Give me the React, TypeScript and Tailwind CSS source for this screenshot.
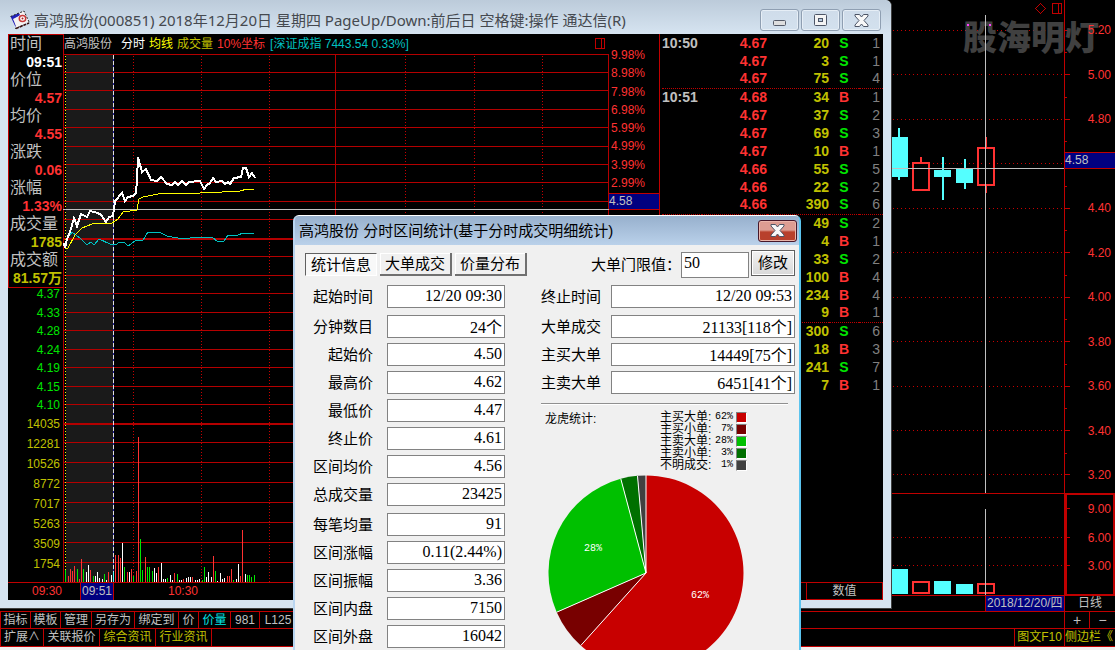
import React from "react";

type Colour = "r" | "g" | "w" | "c";

const barFill: Record<Colour, string> = { r: "#ff3232", g: "#00e600", w: "#ffffff", c: "#54ffff" };

const gridRows = [72, 90, 109, 127, 146, 164, 182, 201, 219, 256, 275, 293, 312, 330, 349, 367, 386, 404, 442, 462, 482, 502, 522, 542, 562];

const volumes: [number, number, Colour][] = [
  [65, 12, "g"], [68, 6, "r"], [70, 13, "r"], [72, 11, "r"], [74, 16, "r"], [77, 13, "g"], [79, 3, "r"], [81, 23, "r"],
  [83, 13, "g"], [86, 10, "w"], [88, 17, "w"], [90, 12, "r"], [93, 6, "g"], [95, 6, "w"], [97, 10, "w"], [99, 4, "w"],
  [102, 3, "w"], [104, 8, "g"], [106, 2, "w"], [108, 10, "r"], [111, 7, "w"], [113, 10, "c"], [115, 27, "r"], [118, 27, "r"],
  [120, 24, "r"], [122, 39, "w"], [124, 15, "g"], [127, 10, "r"], [129, 10, "w"], [131, 13, "r"], [133, 6, "g"], [136, 11, "r"],
  [138, 145, "r"], [140, 43, "g"], [142, 12, "g"], [145, 25, "r"], [147, 15, "g"], [149, 15, "g"], [152, 11, "g"], [154, 14, "w"],
  [156, 9, "w"], [158, 15, "r"], [161, 19, "w"], [163, 3, "w"], [165, 3, "w"], [167, 4, "g"], [170, 7, "w"], [172, 2, "w"],
  [174, 9, "r"], [177, 8, "g"], [179, 2, "w"], [181, 2, "w"], [183, 3, "r"], [186, 4, "w"], [188, 5, "w"], [190, 5, "w"],
  [192, 5, "r"], [195, 2, "w"], [197, 2, "w"], [199, 3, "w"], [202, 2, "g"], [204, 15, "g"], [206, 5, "w"], [208, 10, "w"],
  [211, 5, "w"], [213, 26, "r"], [215, 11, "g"], [217, 1, "w"], [220, 9, "w"], [222, 3, "w"], [224, 4, "w"], [227, 6, "r"],
  [229, 6, "r"], [231, 13, "r"], [233, 2, "g"], [236, 3, "w"], [238, 18, "w"], [240, 6, "r"], [242, 52, "r"], [245, 8, "w"],
  [247, 7, "g"], [249, 7, "g"], [251, 5, "g"], [254, 7, "g"],
];

const priceLine =
  "64,243 65,248 67,239 70,232 74,218 77,226 81,214 87,217 90,211 98,213 101,215 106,222 109,217 113,216 115,201 122,193 125,201 128,197 133,196 136,193 137,180 138,157 142,172 146,169 151,180 157,181 161,177 167,184 172,185 175,182 178,185 182,181 186,185 189,182 200,181 204,189 207,185 210,183 213,178 216,182 222,181 225,184 228,182 230,184 234,178 241,177 243,168 246,168 249,177 252,173 255,178";
const averageLine =
  "65,249 68,248 75,235 82,228 92,224 112,223 118,219 123,212 137,210 139,199 143,197 163,193 200,193 222,192 240,191 247,189 254,189";
const indexLine =
  "67,239 72,232 80,238 87,245 91,242 94,245 99,239 110,244 117,244 119,242 124,242 128,246 135,241 143,240 148,232 159,232 167,236 183,239 197,237 213,238 217,241 224,241 228,235 238,235 243,233 254,233";

const quoteRows = [
  ["时间", "09:51", "text-white"],
  ["价位", "4.57", "text-[#ff3232]"],
  ["均价", "4.55", "text-[#ff3232]"],
  ["涨跌", "0.06", "text-[#ff3232]"],
  ["涨幅", "1.33%", "text-[#ff3232]"],
  ["成交量", "1785", "text-[#c0c000]"],
  ["成交额", "81.57万", "text-[#c0c000]"],
];

const ticks: [string, string, string, string, string][] = [
  ["10:50", "4.67", "20", "S", "1"],
  ["", "4.67", "3", "S", "1"],
  ["", "4.67", "75", "S", "4"],
  ["10:51", "4.68", "34", "B", "1"],
  ["", "4.67", "37", "S", "2"],
  ["", "4.67", "69", "S", "3"],
  ["", "4.67", "10", "B", "1"],
  ["", "4.66", "55", "S", "5"],
  ["", "4.66", "22", "S", "2"],
  ["", "4.66", "390", "S", "6"],
  ["", "", "49", "S", "2"],
  ["", "", "4", "B", "1"],
  ["", "", "33", "S", "2"],
  ["", "", "100", "B", "4"],
  ["", "", "234", "B", "4"],
  ["", "", "9", "B", "1"],
  ["", "", "300", "S", "6"],
  ["", "", "18", "B", "3"],
  ["", "", "241", "S", "7"],
  ["", "", "7", "B", "1"],
];
const minuteStarts = [3, 10, 16];

const leftFields: [string, string][][] = [
  [["起始时间", "12/20 09:30"]],
  [["分钟数目", "24个"], ["起始价", "4.50"], ["最高价", "4.62"], ["最低价", "4.47"], ["终止价", "4.61"], ["区间均价", "4.56"], ["总成交量", "23425"]],
  [["每笔均量", "91"], ["区间涨幅", "0.11(2.44%)"], ["区间振幅", "3.36"], ["区间内盘", "7150"], ["区间外盘", "16042"]],
];
const rightFields: [string, string][][] = [
  [["终止时间", "12/20 09:53"]],
  [["大单成交", "21133[118个]"], ["主买大单", "14449[75个]"], ["主卖大单", "6451[41个]"]],
];

const slices = [
  { name: "主买大单", pct: "62%", fill: "#c80000", swatch: "bg-[#c80000]", from: 0, to: 222 },
  { name: "主买小单", pct: "7%", fill: "#780000", swatch: "bg-[#780000]", from: 222, to: 246.3 },
  { name: "主卖大单", pct: "28%", fill: "#00c000", swatch: "bg-[#00c000]", from: 246.3, to: 345 },
  { name: "主卖小单", pct: "3%", fill: "#007000", swatch: "bg-[#007000]", from: 345, to: 355 },
  { name: "不明成交", pct: "1%", fill: "#404040", swatch: "bg-[#404040]", from: 355, to: 360 },
];

function slicePath(from: number, to: number) {
  const at = (deg: number) => {
    const a = (deg * Math.PI) / 180;
    return `${(98 + 97.5 * Math.sin(a)).toFixed(2)} ${(98 - 97.5 * Math.cos(a)).toFixed(2)}`;
  };
  return `M98 98 L${at(from)} A97.5 97.5 0 ${to - from > 180 ? 1 : 0} 1 ${at(to)} Z`;
}

function Candle({ x, top, bottom, high, low, up }: { x: number; top: number; bottom: number; high: number; low: number; up?: boolean }) {
  return up ? (
    <g fill="none" stroke="#ff3232" strokeWidth="2">
      <rect x={x + 1} y={top + 1} width="16" height={bottom - top - 2} />
      <path d={`M${x + 9} ${high}V${top}M${x + 9} ${bottom}V${low}`} />
    </g>
  ) : (
    <g fill="#54ffff">
      <rect x={x} y={top} width="17" height={bottom - top} />
      <rect x={x + 8} y={high} width="2" height={low - high} />
    </g>
  );
}

function DailyChart() {
  return (
    <svg width="172" height="596" viewBox="892 0 172 596" shapeRendering="crispEdges" className="block shrink-0 overflow-visible">
      <g stroke="#c80000" strokeDasharray="1 3">
        {[30, 74, 119, 163, 208, 252, 297, 341, 386, 430, 474, 537, 565].map((y) => (
          <path key={y} d={`M893 ${y}.5H1064`} />
        ))}
      </g>
      <g stroke="#c00000">
        {[30, 74, 119, 163, 208, 252, 297, 341, 386, 430, 474, 508, 537, 565].map((y) => (
          <path key={y} d={`M1064 ${y}.5h6`} />
        ))}
        {[52, 97, 141, 186, 230, 275, 319, 364, 408, 453, 523, 551].map((y) => (
          <path key={y} d={`M1064 ${y}.5h3`} />
        ))}
        <path d="M892 493.5H1064M892 595.5H1064" />
      </g>
      <text x="963" y="50" fontSize="34" fontWeight="900" fill="#404040" fontFamily="Noto Sans CJK SC, sans-serif">
        股海明灯
      </text>
      <path d="M1040.500 3.500l5 5-5 5-5-5zM1052.500 3.500h9v10h-9zM1058.500 3.500v10" fill="none" stroke="#c00000" />
      <rect x="967" y="24" width="2" height="2" fill="#ff40ff" />
      <rect x="989" y="24" width="2" height="2" fill="#ff40ff" />
      <rect x="892" y="137" width="16" height="40" fill="#54ffff" />
      <rect x="898" y="128" width="2" height="52" fill="#54ffff" />
      <Candle x={912} top={162} bottom={191} high={157} low={191} up />
      <Candle x={934} top={170} bottom={177} high={157} low={200} />
      <Candle x={956} top={169} bottom={183} high={159} low={189} />
      <Candle x={977} top={147} bottom={186} high={137} low={193} up />
      <rect x="892" y="569" width="16" height="25" fill="#54ffff" />
      <rect x="934" y="581" width="17" height="13" fill="#54ffff" />
      <rect x="956" y="584" width="17" height="10" fill="#54ffff" />
      <path d="M913 582h16v11h-16zM978 584h16v9h-16z" fill="none" stroke="#ff3232" strokeWidth="2" />
      <path d="M985.500 15V493M985.500 509V595M892 168.500H1064" stroke="#c0c0c0" />
    </svg>
  );
}

function MinuteChart() {
  return (
    <svg width="546" height="529" viewBox="63 54 546 529" shapeRendering="crispEdges" className="block">
      <rect x="66" y="55" width="47" height="527" fill="#1a1a1a" />
      <g stroke="#b40000">
        <path d="M63 54.500H609M63 582.500H609" />
        {gridRows.map((y) => (
          <path key={y} d={`M63 ${y}.5H609`} />
        ))}
        <path d="M63 239H609M63 424H609" strokeWidth="2" />
        <path d="M63.500 54V583M335.500 54V583M608.500 54V583" />
        <path d="M133.500 56V582M201.500 56V582M269.500 56V582M405.500 56V582M474.500 56V582M542.500 56V582" strokeDasharray="1 2" stroke="#c80000" />
      </g>
      <path d="M65.500 56V582" stroke="#ffff00" strokeDasharray="1 2" />
      <path d="M113.500 55V582" stroke="#2020a0" />
      <path d="M113.500 55V582" stroke="#e0e0e0" strokeDasharray="4 2" />
      <path d="M63 209.500H609" stroke="#c0c0c0" />
      {volumes.map(([x, h, c]) => (
        <rect key={x} x={x} y={582 - h} width="1" height={h} fill={barFill[c]} />
      ))}
      <g fill="none">
        <polyline points={indexLine} stroke="#00c0c0" />
        <polyline points={averageLine} stroke="#ffff00" />
        <polyline points={priceLine} stroke="#ffffff" strokeWidth="2" />
      </g>
    </svg>
  );
}

function CaptionButton({ label, children }: { label: string; children: React.ReactNode }) {
  return (
    <button aria-label={label} className="flex h-[22px] w-[39px] items-center justify-center rounded-[3px] border border-[#8f9fb2] bg-linear-to-b from-[#cfdcea] to-[#d3e1ee] shadow-[inset_0_0_0_1px_#e6eef6]">
      {children}
    </button>
  );
}

function CrossIcon() {
  return (
    <svg width="15" height="13" viewBox="0 0 15 13">
      <path d="M1 .5h4.500l2 2.500 2-2.500H14v1.500L10 6.500l4 4.500v1.500H9.500l-2-2.500-2 2.500H1V11l4-4.500L1 2z" fill="#f8f8f8" stroke="#4d5566" strokeLinejoin="round" />
    </svg>
  );
}

function ChartWindow() {
  return (
    <section className="absolute top-0 left-0 flex h-[609px] w-[892px] flex-col rounded-tr-md border-r border-b border-[#404040] bg-[#d6e4f1] px-2 pb-2">
      <header className="-mx-2 flex h-[34px] shrink-0 items-center rounded-tr-md bg-linear-to-b from-[#bccbda] to-[#d6e4f1] pt-[6px] pr-[10px] pl-[9px]">
        <svg width="22" height="20" viewBox="0 0 22 20" className="shrink-0">
          <path d="M1.500 6.500L15 1l5 10.500L6.500 18z" fill="#f6f2f2" />
          <path d="M1.500 6.500L10 3l1 2-5 4 1 8-1-1z" fill="#2222b8" />
          <path d="M4 9l6-3 3 7-6 3z" fill="#f6f2f2" />
          <path d="M1.500 6.500L15 1l5.500 12L6 18.500" fill="none" stroke="#222" strokeDasharray="2 1.500" />
          <path d="M7 18.500l13-5.500" stroke="#3c1010" strokeWidth="1.500" strokeDasharray="3 1" />
          <ellipse cx="13.500" cy="8.500" rx="3.200" ry="3" fill="#fff" stroke="#c83838" strokeWidth="1.500" />
          <circle cx="13.500" cy="8.500" r="1" fill="#a02020" />
        </svg>
        <h1 className="ml-[3px] grow font-['Noto_Sans','Noto_Sans_CJK_SC',sans-serif] text-[15px] leading-5 whitespace-nowrap text-[#45494f]">
          高鸿股份(000851) 2018年12月20日 星期四 PageUp/Down:前后日 空格键:操作 通达信(R)
        </h1>
        <div className="flex gap-[2px]">
          <CaptionButton label="最小化">
            <svg width="13" height="6" viewBox="0 0 13 6" className="mt-[5px]">
              <rect x=".5" y=".5" width="12" height="5" rx="1" fill="#dedede" stroke="#555b68" />
            </svg>
          </CaptionButton>
          <CaptionButton label="还原">
            <svg width="13" height="12" viewBox="0 0 13 12">
              <rect x=".5" y=".5" width="12" height="11" rx="1" fill="#f4f4f4" stroke="#4d5566" />
              <rect x="4.500" y="4.500" width="4" height="3" fill="#b8cce0" stroke="#4d5566" />
            </svg>
          </CaptionButton>
          <CaptionButton label="关闭">
            <CrossIcon />
          </CaptionButton>
        </div>
      </header>

      <div className="flex min-h-0 grow flex-col bg-black">
        <div className="flex h-[549px]">
          <aside className="flex w-[55px] shrink-0 flex-col">
            <dl className="-mr-px border border-[#c00000] bg-black">
              {quoteRows.map(([name, value, tone]) => (
                <div key={name} className="h-9">
                  <dt className="h-[18px] pl-px text-base leading-[18px] whitespace-nowrap text-[#c0c0c0]">{name}</dt>
                  <dd className={`h-[18px] pr-px text-right text-sm leading-[18px] font-bold whitespace-nowrap ${tone}`}>{value}</dd>
                </div>
              ))}
            </dl>
            <ul className="flex h-[123px] flex-col justify-between pr-[3px] text-right text-xs leading-3 text-[#00e600]">
              {["4.37", "4.33", "4.28", "4.24", "4.19", "4.15", "4.10"].map((t) => (
                <li key={t}>{t}</li>
              ))}
            </ul>
            <ul className="mt-[3px] pr-[3px] text-right text-xs leading-5 text-[#c0c000]">
              {["14035", "12281", "10526", "8772", "7017", "5263", "3509", "1754"].map((t) => (
                <li key={t}>{t}</li>
              ))}
            </ul>
          </aside>

          <div className="w-[546px] shrink-0">
            <div className="flex h-5 items-center gap-1 border-l border-[#c00000] pr-[3px] text-xs whitespace-nowrap">
              <span className="mr-[5px] text-[#c0c0c0]">高鸿股份</span>
              <span className="text-white">分时</span>
              <span className="text-[#ffff00]">均线</span>
              <span className="text-[#c0c000]">成交量</span>
              <span className="text-[#ff3232]">10%坐标</span>
              <span className="ml-px text-[#00c0c0]">[深证成指 7443.54 0.33%]</span>
              <svg width="11" height="12" viewBox="0 0 11 12" shapeRendering="crispEdges" className="ml-auto">
                <path d="M.5.5h9v10h-9zM6.500.5v10" fill="none" stroke="#c00000" />
              </svg>
            </div>
            <MinuteChart />
          </div>

          <div className="flex w-[51px] shrink-0 flex-col border-r border-[#c00000] pt-[15px]">
            <ul className="flex h-[140px] flex-col justify-between pl-[2px] text-xs leading-3 text-[#ff3232]">
              {["9.98%", "8.98%", "7.98%", "6.98%", "5.99%", "4.99%", "3.99%", "2.99%"].map((t) => (
                <li key={t}>{t}</li>
              ))}
            </ul>
            <div className="mt-1 h-[17px] border-y border-[#c00000] bg-[#000080] text-xs leading-[15px] text-[#c0c0c0]">4.58</div>
          </div>

          <div className="grow pl-[2px]">
            <table className="w-full table-fixed border-collapse text-sm leading-[17px] font-bold">
              <tbody>
                {ticks.map(([time, price, amount, side, count], i) => (
                  <tr key={i} className={`h-[18px] ${minuteStarts.includes(i) ? "border-t border-dotted border-[#c00000]" : ""}`}>
                    <td className="w-10 p-0 text-[#c0c0c0]">{time}</td>
                    <td className="w-[65px] p-0 text-right text-[#ff3232]">{price}</td>
                    <td className="w-[62px] p-0 text-right text-[#c0c000]">{amount}</td>
                    <td className={`w-[30px] p-0 text-center ${side === "S" ? "text-[#00e600]" : "text-[#ff3232]"}`}>{side}</td>
                    <td className="p-0 pr-[3px] text-right font-normal text-[#808080]">{count}</td>
                  </tr>
                ))}
              </tbody>
            </table>
          </div>
        </div>

        <div className="-mt-px flex h-[18px] border-t border-[#c00000] text-xs leading-4">
          <span className="w-[72px] pl-6 text-[#ff3232]">09:30</span>
          <span className="w-[34px] border-x border-[#c00000] bg-[#000080] pl-px text-[#c0c0c0]">09:51</span>
          <span className="pl-[54px] text-[#ff3232]">10:30</span>
          <button className="ml-auto w-[77px] border border-t-0 border-[#c00000] text-[#c0c0c0]">数值</button>
        </div>
      </div>
    </section>
  );
}

function Fields({ groups, labelWidth, fieldWidth }: { groups: [string, string][][]; labelWidth: string; fieldWidth: string }) {
  return (
    <div className="flex flex-col gap-[7px]">
      {groups.map((group, g) => (
        <div key={g} className="flex flex-col gap-[5px]">
          {group.map(([name, value]) => (
            <label key={name} className="flex items-center">
              <span className={`text-right whitespace-nowrap ${labelWidth}`}>{name}</span>
              <input readOnly defaultValue={value} className={`h-[23px] border border-[#828282] bg-white pr-[2px] pb-px text-right font-['Liberation_Serif','Noto_Sans_CJK_SC',serif] text-base leading-5 outline-none ${fieldWidth}`} />
            </label>
          ))}
        </div>
      ))}
    </div>
  );
}

function StatsDialog() {
  return (
    <section role="dialog" aria-label="分时区间统计" className="absolute top-[215px] left-[293px] w-[508px] rounded-t-md border-2 border-t border-[#b9d5f0] border-t-white border-r-[#5cc4ee] bg-[#f0f0f0] text-[15px] leading-5 text-black">
      <header className="flex h-[29px] items-center justify-between rounded-t-[4px] bg-linear-to-b from-[#97b0cd] to-[#bad1ea] pr-[2px] pl-1">
        <h2 className="whitespace-nowrap">高鸿股份 分时区间统计(基于分时成交明细统计)</h2>
        <button aria-label="关闭" className="flex h-[22px] w-[39px] items-center justify-center rounded-[3px] border border-[#47182a] bg-linear-to-b from-[#dd9d92] from-45% to-[#b8402c] to-55% shadow-[inset_0_0_0_1px_#eab5aa]">
          <CrossIcon />
        </button>
      </header>

      <div className="pr-1 pl-[10px]">
        <div className="flex pt-[5px]">
          <div role="tablist" className="mt-[3px] flex gap-[3px]">
            <button role="tab" aria-selected="true" className="h-[23px] w-[72px] border border-t-[#606060] border-r-white border-b-white border-l-[#606060] bg-[#f8f8f8]">
              统计信息
            </button>
            <button role="tab" aria-selected="false" className="h-[23px] w-[72px] border-r-2 border-b-2 border-r-[#707070] border-b-[#707070] shadow-[inset_1px_1px_0_#fff]">
              大单成交
            </button>
            <button role="tab" aria-selected="false" className="h-[23px] w-[72px] border-r-2 border-b-2 border-r-[#707070] border-b-[#707070] shadow-[inset_1px_1px_0_#fff]">
              价量分布
            </button>
          </div>
          <label htmlFor="threshold" className="mt-[5px] ml-auto whitespace-nowrap">
            大单门限值：
          </label>
          <input id="threshold" defaultValue="50" className="mt-[2px] h-[26px] w-[68px] border border-[#828282] bg-white pb-1 pl-[2px] font-['Liberation_Serif',serif] text-base leading-5 outline-none" />
          <button className="ml-[2px] h-[26px] w-11 border border-[#606060] bg-linear-to-b from-[#f2f2f2] to-[#d8d8d8] shadow-[inset_0_0_0_1px_#fff]">修改</button>
        </div>

        <div className="flex justify-between pt-[7px]">
          <Fields groups={leftFields} labelWidth="w-[68px] mr-[14px]" fieldWidth="w-[118px]" />
          <div className="flex flex-col">
            <Fields groups={rightFields} labelWidth="w-[60px] mr-[10px]" fieldWidth="w-[184px]" />
            <div className="mt-[9px] mr-[7px] border-t border-b border-t-[#909090] border-b-white" />
            <div className="mt-[6px] flex items-start text-xs leading-3">
              <h3 className="w-[119px] pt-[2px] pl-1">龙虎统计:</h3>
              <ul>
                {slices.map((s) => (
                  <li key={s.name} className="flex h-3 items-center">
                    <span className="w-[52px]">{s.name}:</span>
                    <span className="w-[21px] text-right font-['Liberation_Mono',monospace] text-[10px]">{s.pct}</span>
                    <i className={`ml-[3px] size-[11px] border border-t-[#808080] border-r-white border-b-white border-l-[#808080] ${s.swatch}`} />
                  </li>
                ))}
              </ul>
            </div>
            <svg width="196" height="196" viewBox="0 0 196 196" className="mt-1 ml-[7px] block">
              {slices.map((s) => (
                <path key={s.name} d={slicePath(s.from, s.to)} fill={s.fill} />
              ))}
              <path d="M98 98V0M98 98L32.800 170.500M98 98L8.700 137.200M98 98L72.800 3.800M98 98L89.500 1" stroke="#fff" />
              <g fill="#fff" fontSize="10" textAnchor="middle" fontFamily="Liberation Mono, monospace">
                <text x="45" y="76">28%</text>
                <text x="152" y="123">62%</text>
              </g>
            </svg>
          </div>
        </div>
      </div>
    </section>
  );
}

function ToolCell({ children, className }: { children: React.ReactNode; className: string }) {
  return <button className={`shrink-0 border-r border-[#c00000] text-center whitespace-nowrap ${className}`}>{children}</button>;
}

export default function App() {
  return (
    <main className="relative flex h-screen min-h-[650px] w-full flex-col overflow-hidden bg-black font-['Liberation_Sans','Noto_Sans_CJK_SC',sans-serif] text-xs text-[#c0c0c0]">
      <div className="flex h-[596px] justify-end">
        <DailyChart />
        <div className="relative w-[51px] shrink-0 border-l border-[#c00000] text-[#ff3232]">
          <ul className="flex h-[493px] flex-col justify-between pt-[24px] pr-[4px] pb-[12px] text-right leading-3">
            {["5.20", "5.00", "4.80", "", "4.40", "4.20", "4.00", "3.80", "3.60", "3.40", "3.20"].map((t, i) => (
              <li key={i} className="h-3">{t}</li>
            ))}
          </ul>
          <ul className="flex h-[103px] flex-col justify-between border-2 border-[#c00000] pt-2 pr-[2px] pb-[22px] text-right leading-3">
            {["9.00", "6.00", "3.00"].map((t) => (
              <li key={t}>{t}</li>
            ))}
          </ul>
          <div className="absolute top-[152px] left-0 h-[17px] w-full border-y border-[#c00000] bg-[#000080] leading-[15px] text-[#c0c0c0]">4.58</div>
        </div>
      </div>

      <div className="flex h-[15px] justify-end leading-[15px]">
        <span className="w-[79px] border-l border-[#c00000] bg-[#000080] pl-px whitespace-nowrap">2018/12/20/四</span>
        <span className="w-[51px] border-l border-[#c00000] text-center">日线</span>
      </div>

      <nav className="flex h-[17px] border-t border-l border-[#c00000] leading-4">
        <ToolCell className="w-[30px]">指标</ToolCell>
        <ToolCell className="w-[30px]">模板</ToolCell>
        <ToolCell className="w-[31px]">管理</ToolCell>
        <ToolCell className="w-[43px]">另存为</ToolCell>
        <ToolCell className="w-[44px]">绑定到</ToolCell>
        <ToolCell className="w-[20px]">价</ToolCell>
        <ToolCell className="w-[32px] text-[#00e6e6]">价量</ToolCell>
        <ToolCell className="w-[29px]">981</ToolCell>
        <ToolCell className="w-[37px]">L125</ToolCell>
        <span className="grow" />
        <button aria-label="放大" className="w-[26px] border-x border-[#c00000] text-sm leading-4">+</button>
        <button aria-label="缩小" className="w-[25px] text-sm leading-4">−</button>
      </nav>
      <nav className="flex h-[19px] border-y border-l border-[#c00000] leading-[17px]">
        <ToolCell className="w-[43px]">扩展∧</ToolCell>
        <ToolCell className="w-[56px]">关联报价</ToolCell>
        <ToolCell className="w-[56px] text-[#c0c000]">综合资讯</ToolCell>
        <ToolCell className="w-[56px] text-[#c0c000]">行业资讯</ToolCell>
        <span className="grow border-r border-[#c00000]" />
        <ToolCell className="w-[50px] text-[#c0c000]">图文F10</ToolCell>
        <button className="w-[50px] overflow-hidden text-left whitespace-nowrap text-[#c0c000]">侧边栏《</button>
      </nav>
      <div className="grow bg-[#f0f0f0]" />

      <ChartWindow />
      <StatsDialog />
    </main>
  );
}
